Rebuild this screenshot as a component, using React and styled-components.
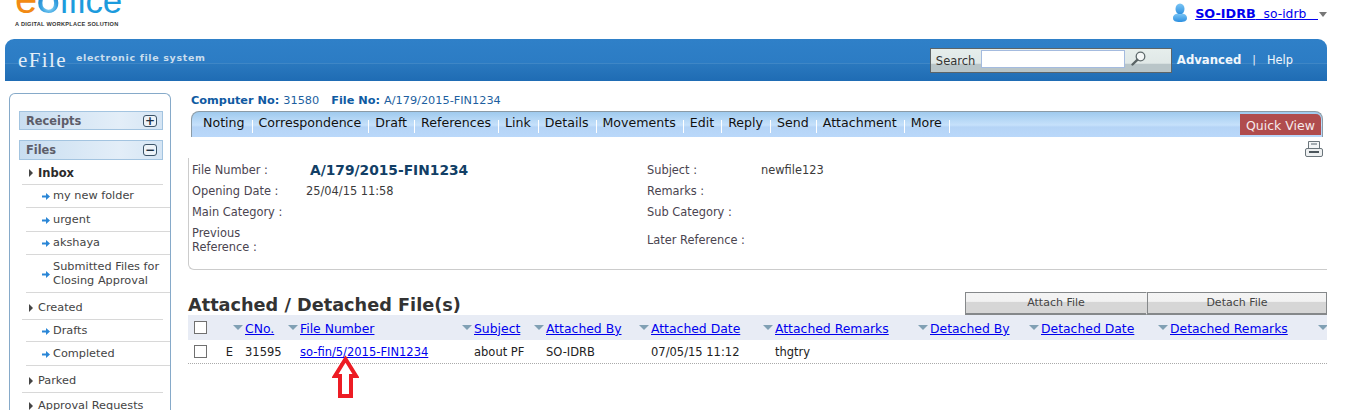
import React from 'react';
import styled, { createGlobalStyle } from 'styled-components';

const GlobalStyle = createGlobalStyle`
  html, body {
    margin: 0;
    padding: 0;
    height: 410px;
    overflow: hidden;
    background: #fff;
    font-family: "DejaVu Sans", Verdana, sans-serif;
  }
`;

const COLUMNS = '45px 55px 174px 72px 105px 124px 155px 111px 129px 160px 9px';

const Page = styled.div`
  width: 1360px;
  height: 410px;
  overflow: hidden;
`;

const TopBar = styled.div`
  height: 39px;
  display: flex;
  justify-content: space-between;
  overflow: hidden;
`;

const Logo = styled.div`
  margin: -20px 0 0 15px;
`;

const LogoWord = styled.div`
  font-family: "Liberation Sans", Arial, sans-serif;
  font-size: 35px;
  line-height: 38px;
  height: 38px;
  color: #1c9bdd;
  letter-spacing: -0.2px;
`;

const LogoE = styled.span`
  color: #f28a14;
  font-size: 40px;
`;

const LogoO = styled.span`
  font-weight: 700;
  font-size: 29px;
  background: radial-gradient(circle at 55% 62%, #a8e4fb 0, #3aa4e2 32%, #0f6fbd 70%);
  -webkit-background-clip: text;
  background-clip: text;
  color: transparent;
`;

const LogoTag = styled.div`
  font-family: "Liberation Sans", Arial, sans-serif;
  font-size: 5.6px;
  font-weight: 700;
  color: #333;
  margin-top: 3px;
  white-space: nowrap;
  letter-spacing: 0.27px;
`;

const UserBox = styled.div`
  display: flex;
  align-items: center;
  height: 26px;
  margin-right: 33px;
`;

const UserLink = styled.a`
  color: #0000ee;
  text-decoration: underline;
  margin-left: 7px;
  white-space: pre;
  font-size: 12.3px;
`;

const UserName = styled.b`
  font-size: 12.8px;
`;

const Caret = styled.span`
  width: 0;
  height: 0;
  margin: 3px 0 0 1px;
  border-left: 4px solid transparent;
  border-right: 4px solid transparent;
  border-top: 5px solid #777;
`;

const Header = styled.div`
  height: 42px;
  margin: 0 33px 0 5px;
  border-radius: 9px 9px 0 0;
  background: linear-gradient(#2f80c8 0, #2c7cc4 56%, #5b9bd2 56%, #2a78be 60%, #1f6cb4 100%);
  display: flex;
  align-items: center;
  color: #fff;
  padding: 0 34px 0 13px;
`;

const Brand = styled.div`
  display: flex;
  align-items: baseline;
  flex: 1;
  margin-top: 1px;
`;

const BrandName = styled.span`
  font-family: "Liberation Serif", serif;
  font-size: 21px;
  letter-spacing: 1.4px;
  color: #e4eef7;
  margin-right: 9px;
`;

const BrandTag = styled.span`
  font-size: 9.5px;
  letter-spacing: 0.65px;
  color: #c9dded;
  position: relative;
  top: -6px;
  font-weight: 600;
`;

const SearchBox = styled.div`
  width: 242px;
  height: 25px;
  box-sizing: border-box;
  border: 1px solid #5c6468;
  background: linear-gradient(#e6eeec 0, #e0e8e7 62%, #b9c5c8 66%, #b9c5c8 100%);
  display: flex;
  align-items: center;
  padding: 2px 0 0 5px;
  color: #333;
  font-size: 11.5px;
`;

const SearchInput = styled.div`
  width: 144px;
  height: 18px;
  box-sizing: border-box;
  margin: -4px 6px 0 6px;
  background: #fff;
  border: 1px solid #a4bbdf;
`;

const HeaderLink = styled.span`
  font-size: ${({ $bold }) => ($bold ? 11.7 : 11.4)}px;
  font-weight: ${({ $bold }) => ($bold ? 700 : 400)};
  color: #f2f7fb;
`;

const HeaderSep = styled.span`
  font-size: 11px;
  margin: 0 11px;
  color: #e6eff7;
`;

const HeaderLinks = styled.div`
  display: flex;
  align-items: center;
  margin-left: 5px;
  margin-top: -1px;
`;

const Body = styled.div`
  display: flex;
  padding-top: 12px;
  align-items: flex-start;
`;

const Sidebar = styled.aside`
  width: 162px;
  height: 340px;
  box-sizing: border-box;
  margin-left: 9px;
  padding: 17px 0 0 0;
  border: 1px solid #86aac9;
  border-bottom: none;
  border-radius: 6px 6px 0 0;
  font-size: 11.3px;
  color: #333;
`;

const SectionHead = styled.div`
  height: ${({ $h }) => $h}px;
  box-sizing: border-box;
  margin: 0 7px 10px 9px;
  border: 1px solid #a3c4e0;
  background: linear-gradient(90deg, #c9def1, #e3eef8 70%, #d5e5f4);
  display: flex;
  align-items: center;
  justify-content: space-between;
  padding: 0 5px 0 6px;
  font-weight: 700;
  color: #5d5d69;
  font-size: 11.4px;
`;

const ToggleBox = styled.span`
  width: 12px;
  height: 10px;
  border: 1px solid #3c5468;
  border-radius: 3px;
  background: #edf3f8;
  display: flex;
  align-items: center;
  justify-content: center;
  color: #1c2f42;
  font-size: 12px;
  font-weight: 700;
  line-height: 10px;
`;

const Group = styled.div`
  display: flex;
  align-items: center;
  height: ${({ $h }) => $h}px;
  box-sizing: border-box;
  margin: 0 7px 0 12px;
  padding: ${({ $pad }) => $pad || 0}px 0 0 17px;
  margin-top: ${({ $top }) => $top || 0}px;
  border-bottom: 1px solid #d8d8d8;
  font-weight: ${({ $bold }) => ($bold ? 700 : 400)};
  font-size: ${({ $bold }) => ($bold ? 11.5 : 11.3)}px;
  color: ${({ $bold }) => ($bold ? '#2b2b2b' : '#444')};
`;

const GroupArrow = styled.span`
  width: 0;
  height: 0;
  margin: 0 5px 0 -10px;
  border-top: 4px solid transparent;
  border-bottom: 4px solid transparent;
  border-left: 4px solid #444;
`;

const SubItem = styled.div`
  display: flex;
  align-items: center;
  height: ${({ $h }) => $h}px;
  margin-left: 16px;
  padding-left: 16px;
  border-bottom: 1px solid #d8d8d8;
  color: #444;
  line-height: 14px;
  box-sizing: border-box;
`;

const Bullet = styled.svg`
  width: 8px;
  height: 7px;
  flex: none;
  margin: 1px 3px 0 0;
`;

const Main = styled.main`
  margin-left: 17px;
  width: 1139px;
  position: relative;
`;

const FileLine = styled.div`
  height: 18px;
  box-sizing: border-box;
  display: flex;
  align-items: center;
  padding: 0 0 4px 3px;
  font-size: 11.3px;
  color: #1d5fa0;
`;

const FileLabel = styled.b`
  color: #0f5aa2;
  margin-right: 4px;
`;

const FileValue = styled.span`
  margin-right: 12px;
`;

const TabBar = styled.div`
  height: 26px;
  box-sizing: border-box;
  margin: 0 4px 0 3px;
  border: 1px solid #8b9ba6;
  border-bottom: none;
  border-radius: 8px 8px 0 0;
  background: linear-gradient(#9fcaee 0, #c6e1fb 52%, #b5d4f6 60%, #bad8fa 100%);
  display: flex;
  align-items: flex-start;
  padding: 0 1px 0 5px;
`;

const Tab = styled.span`
  font-size: 12.6px;
  color: #111;
  padding: 3px 8px 0 6px;
  height: 24px;
  box-sizing: border-box;
  position: relative;
  &::after {
    content: '';
    position: absolute;
    right: 0;
    top: 8px;
    height: 13px;
    width: 1px;
    background: #fff;
  }
`;

const QuickView = styled.span`
  margin-left: auto;
  margin-top: 2px;
  width: 81px;
  height: 21px;
  padding-top: 1px;
  box-sizing: border-box;
  background: #b04c4d;
  border-radius: 0 5px 0 0;
  color: #f6eaea;
  font-size: 12.5px;
  display: flex;
  align-items: center;
  justify-content: center;
`;

const PrintRow = styled.div`
  display: flex;
  justify-content: flex-end;
  height: 21px;
  padding: 4px 4px 0 0;
  box-sizing: border-box;
`;

const DetailPanel = styled.div`
  height: 112px;
  box-sizing: border-box;
  border-left: 1px solid #ccc;
  border-bottom: 1px solid #ccc;
  border-radius: 0 0 0 6px;
  padding: 1px 0 0 3px;
  display: grid;
  grid-template-columns: 114px 341px 114px 1fr;
  grid-template-rows: 21px 21px 21px 35px;
  align-items: center;
  font-size: 11.4px;
  color: #4a4450;
  line-height: 14px;
`;

const BigValue = styled.span`
  font-size: 13.8px;
  font-weight: 700;
  color: #123f66;
  margin-left: 4px;
`;

const PlainValue = styled.span`
  color: #3b3b3b;
`;

const SectionRow = styled.div`
  height: 45px;
  display: flex;
  justify-content: space-between;
  align-items: flex-end;
`;

const SectionTitle = styled.h2`
  margin: 0 0 -2px 0;
  font-size: 17.7px;
  font-weight: 700;
  color: #333;
  line-height: 24px;
  height: 24px;
  white-space: nowrap;
`;

const ActionGroup = styled.div`
  display: flex;
`;

const ActionButton = styled.button`
  width: ${({ $w }) => $w}px;
  height: 23px;
  box-sizing: border-box;
  border: 1px solid #85888a;
  border-right-color: ${({ $open }) => ($open ? 'transparent' : '#85888a')};
  border-bottom-width: 2px;
  background: linear-gradient(#f4f4f4 0, #f2f2f2 42%, #d6d6d6 46%, #d6d6d6 100%);
  font-family: inherit;
  font-size: 11px;
  color: #444;
  padding: 0 0 2px 0;
`;

const TableRow = styled.div`
  display: grid;
  grid-template-columns: ${COLUMNS};
  align-items: center;
  height: ${({ $head }) => ($head ? 25 : 24)}px;
  box-sizing: border-box;
  background: ${({ $head }) => ($head ? '#e8ecf5' : '#fff')};
  border-bottom: ${({ $head }) => ($head ? 'none' : '1px dotted #aaa')};
  font-size: 11.5px;
  color: #222;
  overflow: hidden;
`;

const CheckCell = styled.div`
  display: flex;
  align-items: center;
  justify-content: space-between;
  padding: 0 0 0 6px;
`;

const CheckBox = styled.span`
  width: 13px;
  height: 13px;
  box-sizing: border-box;
  border: 1px solid #707070;
  background: #fff;
`;

const HeadCell = styled.div`
  display: flex;
  align-items: center;
  white-space: nowrap;
  font-size: 12.4px;
  padding-top: 1px;
`;

const SortMark = styled.span`
  width: 0;
  height: 0;
  flex: none;
  margin: -2px 2px 0 0;
  border-left: 5px solid transparent;
  border-right: 5px solid transparent;
  border-top: 5px solid #80a0b4;
`;

const HeadLink = styled.a`
  color: #0000ee;
  text-decoration: underline;
`;

const BodyCell = styled.div`
  padding: 1px 0 0 12px;
  white-space: nowrap;
`;

const RowLink = styled.a`
  color: #0000ee;
  text-decoration: underline;
`;

const MarkArrow = styled.svg`
  position: absolute;
  left: 144px;
  top: 262px;
  width: 27px;
  height: 44px;
`;

const PlusIcon = ({ minus }) => (
  <ToggleBox>{minus ? '−' : '+'}</ToggleBox>
);

const BlueBullet = () => (
  <Bullet viewBox="0 0 8 7">
    <path d="M0 2.500h4V0l4 3.500L4 7V4.500H0z" fill="#2a86d6" />
  </Bullet>
);

const UserIcon = () => (
  <svg width="16" height="20" viewBox="0 0 16 20">
    <defs>
      <linearGradient id="usr" x1="0" y1="0" x2="0" y2="1">
        <stop offset="0" stopColor="#7cc6f5" />
        <stop offset="1" stopColor="#2b8fe0" />
      </linearGradient>
    </defs>
    <ellipse cx="8" cy="6" rx="4.500" ry="5.500" fill="url(#usr)" />
    <path d="M1 15c0-3 2.500-4 4.500-4.500 1.500 1 3.500 1 5 0 2 .5 4.500 1.500 4.500 4.500 0 3-2.500 4-7 4s-7-1-7-4z" fill="url(#usr)" />
  </svg>
);

const SearchIcon = () => (
  <svg width="15" height="15" viewBox="0 0 15 15" style={{ marginTop: -5 }}>
    <circle cx="9.500" cy="5.500" r="4.300" fill="#f4f7f7" stroke="#5f6a6c" strokeWidth="1.300" />
    <path d="M6.300 8.800L1.500 13.500" stroke="#5a6466" strokeWidth="2.400" strokeLinecap="round" />
  </svg>
);

const PrintIcon = () => (
  <svg width="18" height="16" viewBox="0 0 18 16">
    <path d="M3.500.5h11v8h-11z" fill="#f4f6f7" stroke="#6b757b" />
    <path d="M6 3h6" stroke="#a5adb2" strokeWidth="2" />
    <rect x=".5" y="7.500" width="17" height="8" rx="1.500" fill="#eef0f1" stroke="#6b757b" />
    <path d="M4 11h10" stroke="#4c565c" strokeWidth="2" />
  </svg>
);

const HEADINGS = [
  'CNo.',
  'File Number',
  'Subject',
  'Attached By',
  'Attached Date',
  'Attached Remarks',
  'Detached By',
  'Detached Date',
  'Detached Remarks',
];

const ROW = ['31595', null, 'about PF', 'SO-IDRB', '07/05/15 11:12', 'thgtry'];

const App = () => (
  <Page>
    <GlobalStyle />
    <TopBar>
      <Logo>
        <LogoWord><LogoE>e</LogoE><LogoO>O</LogoO>ffice</LogoWord>
        <LogoTag>A DIGITAL WORKPLACE SOLUTION</LogoTag>
      </Logo>
      <UserBox>
        <UserIcon />
        <UserLink href="#"><UserName>SO-IDRB</UserName>  so-idrb   </UserLink>
        <Caret />
      </UserBox>
    </TopBar>

    <Header>
      <Brand>
        <BrandName>eFile</BrandName>
        <BrandTag>electronic file system</BrandTag>
      </Brand>
      <SearchBox>
        Search
        <SearchInput />
        <SearchIcon />
      </SearchBox>
      <HeaderLinks>
        <HeaderLink $bold>Advanced</HeaderLink>
        <HeaderSep>|</HeaderSep>
        <HeaderLink>Help</HeaderLink>
      </HeaderLinks>
    </Header>

    <Body>
      <Sidebar>
        <SectionHead $h={19}>Receipts<PlusIcon /></SectionHead>
        <SectionHead $h={20}>Files<PlusIcon minus /></SectionHead>
        <Group $h={23} $top={-8} $bold><GroupArrow />Inbox</Group>
        <SubItem $h={23}><BlueBullet />my new folder</SubItem>
        <SubItem $h={24}><BlueBullet />urgent</SubItem>
        <SubItem $h={23}><BlueBullet />akshaya</SubItem>
        <SubItem $h={38}><BlueBullet />Submitted Files for<br />Closing Approval</SubItem>
        <Group $h={27} $pad={3}><GroupArrow />Created</Group>
        <SubItem $h={22}><BlueBullet />Drafts</SubItem>
        <SubItem $h={24}><BlueBullet />Completed</SubItem>
        <Group $h={27} $pad={3}><GroupArrow />Parked</Group>
        <Group $h={26}><GroupArrow />Approval Requests</Group>
      </Sidebar>

      <Main>
        <FileLine>
          <FileLabel>Computer No:</FileLabel>
          <FileValue>31580</FileValue>
          <FileLabel>File No:</FileLabel>
          A/179/2015-FIN1234
        </FileLine>
        <TabBar>
          {['Noting', 'Correspondence', 'Draft', 'References', 'Link', 'Details', 'Movements', 'Edit', 'Reply', 'Send', 'Attachment', 'More'].map((tab) => (
            <Tab key={tab}>{tab}</Tab>
          ))}
          <QuickView>Quick View</QuickView>
        </TabBar>
        <PrintRow><PrintIcon /></PrintRow>
        <DetailPanel>
          <span>File Number :</span>
          <BigValue>A/179/2015-FIN1234</BigValue>
          <span>Subject :</span>
          <PlainValue>newfile123</PlainValue>
          <span>Opening Date :</span>
          <PlainValue>25/04/15 11:58</PlainValue>
          <span>Remarks :</span>
          <span />
          <span>Main Category :</span>
          <span />
          <span>Sub Category :</span>
          <span />
          <span>Previous<br />Reference :</span>
          <span />
          <span>Later Reference :</span>
          <span />
        </DetailPanel>
        <SectionRow>
          <SectionTitle>Attached / Detached File(s)</SectionTitle>
          <ActionGroup>
            <ActionButton $w={182} $open>Attach File</ActionButton>
            <ActionButton $w={180}>Detach File</ActionButton>
          </ActionGroup>
        </SectionRow>
        <TableRow $head>
          <CheckCell><CheckBox /></CheckCell>
          {HEADINGS.map((heading) => (
            <HeadCell key={heading}>
              <SortMark />
              <HeadLink href="#">{heading}</HeadLink>
            </HeadCell>
          ))}
          <HeadCell><SortMark /></HeadCell>
        </TableRow>
        <TableRow>
          <CheckCell><CheckBox />E</CheckCell>
          {ROW.map((value) => (
            <BodyCell key={value || 'link'}>
              {value || <RowLink href="#">so-fin/5/2015-FIN1234</RowLink>}
            </BodyCell>
          ))}
        </TableRow>
        <MarkArrow viewBox="0 0 27 44">
          <path d="M13.500 4L24 21H19V41H8V21H3z" fill="#fff" stroke="#ed1c24" strokeWidth="4" />
        </MarkArrow>
      </Main>
    </Body>
  </Page>
);

export default App;
